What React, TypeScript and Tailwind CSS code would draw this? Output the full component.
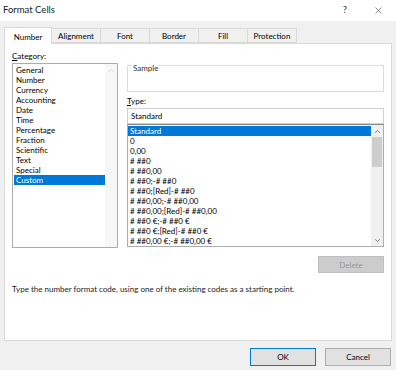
import { ChevronUp, ChevronDown, X } from "lucide-react";

const categories = [
  "General",
  "Number",
  "Currency",
  "Accounting",
  "Date",
  "Time",
  "Percentage",
  "Fraction",
  "Scientific",
  "Text",
  "Special",
  "Custom",
];

const formats = [
  "Standard",
  "0",
  "0,00",
  "# ##0",
  "# ##0,00",
  "# ##0;-# ##0",
  "# ##0;[Red]-# ##0",
  "# ##0,00;-# ##0,00",
  "# ##0,00;[Red]-# ##0,00",
  "# ##0 €;-# ##0 €",
  "# ##0 €;[Red]-# ##0 €",
  "# ##0,00 €;-# ##0,00 €",
];

const tabs = ["Number", "Alignment", "Font", "Border", "Fill", "Protection"];

const App = () => {
  return (
    <div className="w-[396px] h-[370px] bg-[#f0f0f0] flex flex-col font-['Lato',sans-serif] text-[8px] text-black overflow-hidden">
      {/* Title bar */}
      <div className="h-[21px] bg-white flex items-center justify-between pl-[3px] pr-[12px] shrink-0">
        <span className="text-[9.5px] text-[#1a1a1a]">Format Cells</span>
        <div className="flex items-center gap-[26px] text-[#333]">
          <span className="text-[9.5px]">?</span>
          <X size={11} strokeWidth={1.2} />
        </div>
      </div>

      {/* Tabs */}
      <div className="flex pl-[4px] mt-[6px] h-[16px] items-end relative z-10">
        {tabs.map((t, i) =>
          i === 0 ? (
            <div
              key={t}
              className="w-[48px] h-[17px] bg-white border border-[#d9d9d9] border-b-0 flex items-center justify-center pt-[2px] -mb-px"
            >
              {t}
            </div>
          ) : (
            <div
              key={t}
              className="w-[49px] h-[15px] bg-[#f0f0f0] border border-[#d9d9d9] border-l-0 flex items-center justify-center pt-px"
            >
              {t}
            </div>
          )
        )}
      </div>

      {/* Panel */}
      <div className="mx-[4px] h-[298px] bg-white border border-[#d9d9d9] flex flex-col px-[7px]">
        <div className="flex gap-[9px] mt-[7px]">
          {/* Category */}
          <div className="w-[106px] flex flex-col">
            <div className="h-[12px] leading-[10px]">
              <span className="underline">C</span>ategory:
            </div>
            <div className="h-[185px] border border-[#adadad] flex">
              <div className="flex-1 flex flex-col pt-px pl-px">
                {categories.map((c) => (
                  <div
                    key={c}
                    className={`h-[10px] leading-[10px] pl-[2px] ${
                      c === "Custom" ? "bg-[#0078d7] text-white" : ""
                    }`}
                  >
                    {c}
                  </div>
                ))}
              </div>
              <div className="w-[12px] bg-[#f7f7f7] flex flex-col items-center pt-[2px]">
                <ChevronUp size={9} className="text-[#c0c0c0]" strokeWidth={1.5} />
              </div>
            </div>
          </div>

          {/* Type */}
          <div className="flex-1 flex flex-col pt-[14px]">
            <div className="relative h-[27px] border border-[#dcdcdc]">
              <span className="absolute -top-[3px] left-[4px] bg-white px-px text-[#333] leading-[10px]">
                Sample
              </span>
            </div>
            <div className="mt-[3px] h-[12px] leading-[12px]">
              <span className="underline">T</span>ype:
            </div>
            <div className="mt-px h-[16px] border border-[#cfcfcf] flex items-center pl-[3px]">
              Standard
            </div>
            <div className="h-[123px] border border-[#adadad] border-t-[#8a8a8a] flex">
              <div className="flex-1 flex flex-col pt-px">
                {formats.map((f, i) => (
                  <div
                    key={f}
                    className={`h-[10px] leading-[10px] pl-[2px] whitespace-pre ${
                      i === 0 ? "bg-[#0078d7] text-white" : ""
                    }`}
                  >
                    {f}
                  </div>
                ))}
              </div>
              <div className="w-[12px] bg-[#f0f0f0] flex flex-col">
                <div className="h-[12px] flex items-center justify-center">
                  <ChevronUp size={9} className="text-[#606060]" strokeWidth={1.8} />
                </div>
                <div className="h-[30px] bg-[#cdcdcd] mx-px" />
                <div className="flex-1" />
                <div className="h-[12px] flex items-center justify-center">
                  <ChevronDown size={9} className="text-[#606060]" strokeWidth={1.8} />
                </div>
              </div>
            </div>
            <div className="flex justify-end mt-[9px]">
              <div className="w-[66px] h-[17px] bg-[#cccccc] border border-[#bfbfbf] text-[#9a9a9a] flex items-center justify-center">
                Delete
              </div>
            </div>
          </div>
        </div>
        <div className="mt-[10px] text-[#1a1a1a]">
          Type the number format code, using one of the existing codes as a
          starting point.
        </div>
      </div>

      {/* Footer buttons */}
      <div className="flex justify-end gap-[9px] pr-[5px] mt-[7px]">
        <div className="w-[66px] h-[18px] bg-[#e1e1e1] border border-[#0078d7] flex items-center justify-center">
          OK
        </div>
        <div className="w-[66px] h-[18px] bg-[#e1e1e1] border border-[#adadad] flex items-center justify-center">
          Cancel
        </div>
      </div>
    </div>
  );
};

export default App;
